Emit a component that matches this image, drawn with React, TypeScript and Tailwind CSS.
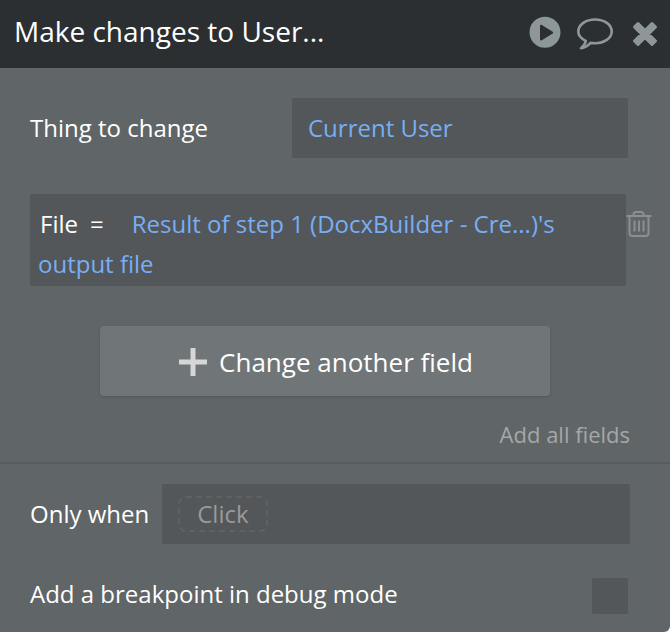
const PlayIcon = () => (
  <svg width="32" height="32" viewBox="0 0 32 32" aria-hidden="true">
    <path
      fill="currentColor"
      fillRule="evenodd"
      d="M16 .7a15.5 15.5 0 1 1 0 31a15.5 15.5 0 0 1 0-31ZM11 9.4v14.2c0 .8.8 1.2 1.4.8l11.3-7c.6-.4.6-1.2 0-1.6l-11.3-7c-.6-.4-1.4 0-1.4.6Z"
    />
  </svg>
);

const CommentIcon = () => (
  <svg
    width="36"
    height="32"
    viewBox="0 0 36 32"
    fill="none"
    stroke="currentColor"
    strokeWidth="2.6"
    strokeLinejoin="round"
    aria-hidden="true"
  >
    <path d="M18 1.5C9 1.5 1.3 6.500 1.3 13.500c0 3.800 3 7.200 7.500 9.400c-.5 2.600-2 5-4.800 7.300c4.200-.6 7.200-2.500 9.500-5.300c1.500.2 3 .3 4.500.3c9.200 0 16.700-5 16.700-11.700C34.700 6.500 27.200 1.500 18 1.500Z" />
  </svg>
);

const CloseIcon = () => (
  <svg width="26" height="26" viewBox="0 0 26 26" aria-hidden="true">
    <path
      fill="currentColor"
      stroke="currentColor"
      strokeWidth="3"
      strokeLinejoin="round"
      d="M6 2.500L13 9.500L20 2.500L23.500 6L16.500 13L23.500 20L20 23.500L13 16.500L6 23.500L2.500 20L9.500 13L2.500 6Z"
    />
  </svg>
);

const TrashIcon = () => (
  <svg
    width="26"
    height="28"
    viewBox="0 0 26 28"
    fill="none"
    stroke="currentColor"
    strokeWidth="2"
    aria-hidden="true"
  >
    <path d="M.5 6h25M7.500 6V4.500Q7.500 2 10 2h5Q17.500 2 17.500 4.500V6" />
    <path d="M3.500 6v17q0 3 3 3h13q3 0 3-3V6" />
    <path d="M8.500 10.500v11M13 10.500v11M17.500 10.500v11" />
  </svg>
);

const PlusIcon = () => (
  <svg width="28" height="28" viewBox="0 0 28 28" aria-hidden="true">
    <path d="M14 0v28M0 14h28" stroke="currentColor" strokeWidth="5" />
  </svg>
);

const App = () => {
  return (
    <div className="bg-white">
      <div className="overflow-hidden rounded-br-md bg-[#606567] font-['Open_Sans',sans-serif] text-2xl text-white">
        <header className="flex h-17 items-center justify-between bg-[#2b2f32] pr-3 pb-1 pl-[14px]">
          <h1 className="text-[28px]">Make changes to User...</h1>
          <div className="flex items-center gap-4 text-[#8e9798]">
            <button type="button" aria-label="Run">
              <PlayIcon />
            </button>
            <button type="button" aria-label="Comment" className="pt-1 pr-[3px]">
              <CommentIcon />
            </button>
            <button type="button" aria-label="Close" className="pt-1">
              <CloseIcon />
            </button>
          </div>
        </header>

        <section className="pt-[30px] pb-3">
          <div className="flex items-center justify-between pr-[42px] pl-[30px]">
            <label htmlFor="thing">Thing to change</label>
            <button
              id="thing"
              type="button"
              className="h-15 w-3/5 max-w-[336px] rounded-xs bg-[#535759] px-4 text-left text-[#78aef5]"
            >
              Current User
            </button>
          </div>

          <div className="mt-9 flex pr-[18px] pl-[30px]">
            <div className="flex-1 rounded-xs bg-[#535759] px-2 pt-[10px] pb-[2px] leading-10">
              <span className="ml-[2px]">File</span>
              <span className="mr-7 ml-3">=</span>
              <a href="#step" className="text-[#78aef5]">
                Result of step 1 (DocxBuilder - Cre...)'s output file
              </a>
            </div>
            <button
              type="button"
              aria-label="Delete field"
              className="mt-4 self-start text-[#8b8f91]"
            >
              <TrashIcon />
            </button>
          </div>

          <div className="mt-10 pr-[120px] pl-[100px]">
            <button
              type="button"
              className="flex h-[70px] w-full items-center justify-center gap-3 rounded-sm bg-[#707577] pt-[2px] pl-[2px] text-[26px] shadow-sm"
            >
              <span className="text-[#d6d6d6]">
                <PlusIcon />
              </span>
              Change another field
            </button>
          </div>

          <div className="mt-[22px] pr-10 text-right">
            <button type="button" className="text-[22px] leading-[30px] text-[#a5a7a8]">
              Add all fields
            </button>
          </div>
        </section>

        <section className="border-t-2 border-[#585c5e] pt-5 pb-[18px] pl-[30px]">
          <div className="flex items-center gap-[13px] pr-10">
            <label htmlFor="condition">Only when</label>
            <button
              id="condition"
              type="button"
              className="flex h-15 flex-1 items-center rounded-xs bg-[#535759] px-4 text-[#9a9a9a]"
            >
              <span className="rounded-lg border-2 border-dashed border-[#5e6264] px-[17px] leading-8">
                Click
              </span>
            </button>
          </div>

          <div className="mt-[34px] flex items-center justify-between pr-[42px]">
            <label htmlFor="breakpoint" className="-mt-1">
              Add a breakpoint in debug mode
            </label>
            <input
              id="breakpoint"
              type="checkbox"
              className="size-9 appearance-none rounded-xs bg-[#535759]"
            />
          </div>
        </section>
      </div>
    </div>
  );
};

export default App;
